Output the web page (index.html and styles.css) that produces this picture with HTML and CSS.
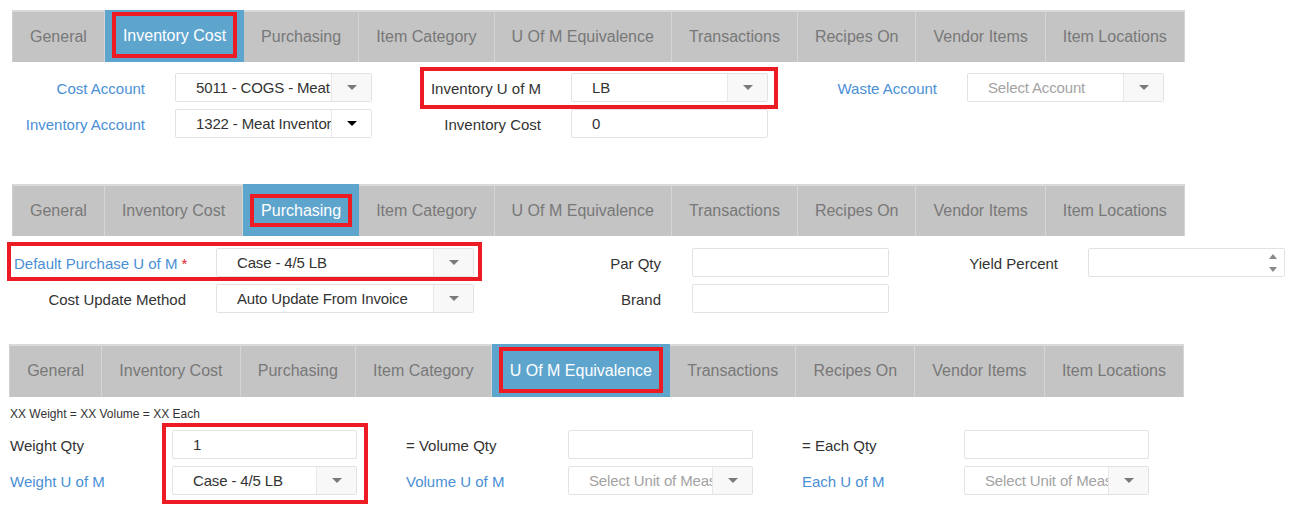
FILE: index.html
```html
<!DOCTYPE html>
<html>
<head>
<meta charset="utf-8">
<link rel="stylesheet" href="styles.css">
</head>
<body>
<div class="panel p1">
  <div class="tabbar">
    <div class="tab">General</div>
    <div class="tab active"><span class="mark">Inventory Cost</span></div>
    <div class="tab">Purchasing</div>
    <div class="tab">Item Category</div>
    <div class="tab">U Of M Equivalence</div>
    <div class="tab">Transactions</div>
    <div class="tab">Recipes On</div>
    <div class="tab">Vendor Items</div>
    <div class="tab">Item Locations</div>
  </div>
  <div class="form">
    <div class="group g1">
      <div class="row">
        <span class="lbl link">Cost Account</span>
        <div class="ctl"><span class="val">5011 - COGS - Meat</span><span class="btn"><i class="caret"></i></span></div>
      </div>
      <div class="row">
        <span class="lbl link">Inventory Account</span>
        <div class="ctl"><span class="val">1322 - Meat Inventory</span><span class="btn btn-focus"><i class="caret caret-dark"></i></span></div>
      </div>
    </div>
    <div class="group g2">
      <div class="row hl hl-uom">
        <span class="lbl">Inventory U of M</span>
        <div class="ctl"><span class="val">LB</span><span class="btn"><i class="caret"></i></span></div>
      </div>
      <div class="row">
        <span class="lbl">Inventory Cost</span>
        <div class="ctl"><span class="val">0</span></div>
      </div>
    </div>
    <div class="group g3">
      <div class="row">
        <span class="lbl link">Waste Account</span>
        <div class="ctl"><span class="val ph">Select Account</span><span class="btn"><i class="caret"></i></span></div>
      </div>
    </div>
  </div>
</div>

<div class="panel p2">
  <div class="tabbar">
    <div class="tab">General</div>
    <div class="tab">Inventory Cost</div>
    <div class="tab active"><span class="mark">Purchasing</span></div>
    <div class="tab">Item Category</div>
    <div class="tab">U Of M Equivalence</div>
    <div class="tab">Transactions</div>
    <div class="tab">Recipes On</div>
    <div class="tab">Vendor Items</div>
    <div class="tab">Item Locations</div>
  </div>
  <div class="form">
    <div class="group g1">
      <div class="row hl hl-dp">
        <span class="lbl link">Default Purchase U of M <b class="req">*</b></span>
        <div class="ctl"><span class="val">Case - 4/5 LB</span><span class="btn"><i class="caret"></i></span></div>
      </div>
      <div class="row">
        <span class="lbl">Cost Update Method</span>
        <div class="ctl"><span class="val">Auto Update From Invoice</span><span class="btn"><i class="caret"></i></span></div>
      </div>
    </div>
    <div class="group g2">
      <div class="row">
        <span class="lbl">Par Qty</span>
        <div class="ctl"><span class="val"></span></div>
      </div>
      <div class="row">
        <span class="lbl">Brand</span>
        <div class="ctl"><span class="val"></span></div>
      </div>
    </div>
    <div class="group g3">
      <div class="row">
        <span class="lbl">Yield Percent</span>
        <div class="ctl"><span class="val"></span><span class="spin"><i class="up"></i><i class="down"></i></span></div>
      </div>
    </div>
  </div>
</div>

<div class="panel p3">
  <div class="tabbar">
    <div class="tab">General</div>
    <div class="tab">Inventory Cost</div>
    <div class="tab">Purchasing</div>
    <div class="tab">Item Category</div>
    <div class="tab active"><span class="mark">U Of M Equivalence</span></div>
    <div class="tab">Transactions</div>
    <div class="tab">Recipes On</div>
    <div class="tab">Vendor Items</div>
    <div class="tab">Item Locations</div>
  </div>
  <div class="note">XX Weight = XX Volume = XX Each</div>
  <div class="form">
    <div class="group">
      <div class="lbls">
        <span class="lbl">Weight Qty</span>
        <span class="lbl link">Weight U of M</span>
      </div>
      <div class="ctls hl hl-w">
        <div class="ctl"><span class="val">1</span></div>
        <div class="ctl"><span class="val">Case - 4/5 LB</span><span class="btn"><i class="caret"></i></span></div>
      </div>
    </div>
    <div class="group">
      <div class="lbls">
        <span class="lbl">= Volume Qty</span>
        <span class="lbl link">Volume U of M</span>
      </div>
      <div class="ctls">
        <div class="ctl"><span class="val"></span></div>
        <div class="ctl"><span class="val ph">Select Unit of Measure</span><span class="btn"><i class="caret"></i></span></div>
      </div>
    </div>
    <div class="group">
      <div class="lbls">
        <span class="lbl">= Each Qty</span>
        <span class="lbl link">Each U of M</span>
      </div>
      <div class="ctls">
        <div class="ctl"><span class="val"></span></div>
        <div class="ctl"><span class="val ph">Select Unit of Measure</span><span class="btn"><i class="caret"></i></span></div>
      </div>
    </div>
  </div>
</div>
</body>
</html>
```

FILE: styles.css
```css
html, body {
  margin: 0;
  padding: 0;
  background: #fff;
  font-family: "Liberation Sans", Arial, sans-serif;
  color: #333;
}
body { min-height: 520px; }

.panel {
  display: flex;
  flex-direction: column;
  align-items: flex-start;
}

/* tab bars */
.tabbar {
  display: flex;
  height: 52px;
  background: #c4c4c4;
  box-shadow: inset 0 2px 0 #dadada;
  border-left: 1px solid #cfcfcf;
}
.tab {
  display: flex;
  align-items: center;
  padding: 1px 17px 0;
  border-right: 1px solid #d5d5d5;
  font-size: 16px;
  color: #787878;
  white-space: nowrap;
}
.tab.active {
  background: #5ea5ce;
  padding: 0 7px;
  border-right: none;
  align-items: stretch;
}
.mark {
  display: flex;
  align-items: center;
  border: 4px solid #ed1c24;
  padding: 1px 7px 0;
  color: #fff;
}

.p1 { padding: 10px 0 0 12px; }
.p1 .mark { margin: 2px 0 4px; }
.p2 { padding: 46px 0 0 12px; }
.p2 .mark { margin: 10px 0 9px; }
.p3 { padding: 31px 0 24px 9px; }
.p3 .tabbar { height: 53px; }
.p3 .tab { padding-left: 17.15px; padding-right: 17.15px; }
.p3 .tab.active { padding: 0 7px; }
.p3 .mark { margin: 3px 0 4px; }

/* forms */
.form {
  display: flex;
  align-items: flex-start;
}
.p1 .form { margin-top: 11px; padding-left: 13px; }
.p2 .form { margin-top: 12px; padding-left: 2px; }
.p3 .form { margin-top: 10px; padding-left: 1px; }

.group {
  display: flex;
  flex-direction: column;
  gap: 7px;
}
.row {
  display: flex;
  align-items: center;
  gap: 30px;
}
.lbl {
  font-size: 15px;
  color: #333;
  white-space: nowrap;
  line-height: 29px;
  padding-top: 1px;
  height: 29px;
  box-sizing: border-box;
}
.lbl.link { color: #4a8fd6; }
.req { color: #e5262b; font-weight: normal; }

.p1 .lbl { width: 120px; text-align: right; }
.p1 .ctl { width: 197px; }
.p1 .g2, .p1 .g3 { margin-left: 49px; }

.p2 .g1 .lbl { width: 172px; text-align: right; }
.p2 .g1 .ctl { width: 258px; }
.p2 .g2 .lbl, .p2 .g3 .lbl { width: 120px; text-align: right; }
.p2 .g2 .ctl, .p2 .g3 .ctl { width: 197px; }
.p2 .g2 { margin-left: 67px; }
.p2 .g2 .row { gap: 31px; }
.p2 .g3 { margin-left: 49px; }

.note {
  font-size: 12px;
  line-height: 14px;
  color: #333;
  margin: 10px 0 0 1px;
}
.p3 .group {
  flex-direction: row;
  gap: 30px;
}
.p3 .group + .group { margin-left: 49px; }
.lbls, .ctls {
  display: flex;
  flex-direction: column;
  gap: 7px;
}
.p3 .lbl { width: 132px; }
.p3 .ctl { width: 185px; }
.p3 .form { margin-top: 9px; }

/* controls */
.ctl {
  display: flex;
  height: 29px;
  box-sizing: border-box;
  border: 1px solid #e2e2e2;
  border-radius: 2px;
  background: #fff;
}
.val {
  flex: 1;
  min-width: 0;
  padding: 1px 0 0 20px;
  font-size: 15px;
  line-height: 26px;
  letter-spacing: -0.15px;
  color: #333;
  white-space: nowrap;
  overflow: hidden;
}
.val.ph { color: #a3a3a3; }
.btn {
  width: 39px;
  flex: none;
  display: flex;
  align-items: center;
  justify-content: center;
  border-left: 1px solid #e8e8e8;
  background: #f8f8f8;
}
.btn-focus { background: #fff; }
.caret {
  width: 0;
  height: 0;
  border-left: 5px solid transparent;
  border-right: 5px solid transparent;
  border-top: 5px solid #7a7a7a;
}
.caret-dark { border-top-color: #000; }

.spin {
  width: 22px;
  flex: none;
  display: flex;
  flex-direction: column;
  align-items: center;
  justify-content: center;
  gap: 8px;
}
.up, .down {
  width: 0;
  height: 0;
  border-left: 4px solid transparent;
  border-right: 4px solid transparent;
}
.up { border-bottom: 5px solid #8a8a8a; }
.down { border-top: 5px solid #8a8a8a; }

/* red annotation boxes */
.hl { position: relative; }
.hl::after {
  content: "";
  position: absolute;
  border: 4px solid #ed1c24;
  pointer-events: none;
}
.hl-uom::after { inset: -6px -10px -7px -1px; }
.hl-dp::after { inset: -6px -8px -4px -7px; }
.hl-w::after { inset: -7px -11px -9px -10px; }
```
